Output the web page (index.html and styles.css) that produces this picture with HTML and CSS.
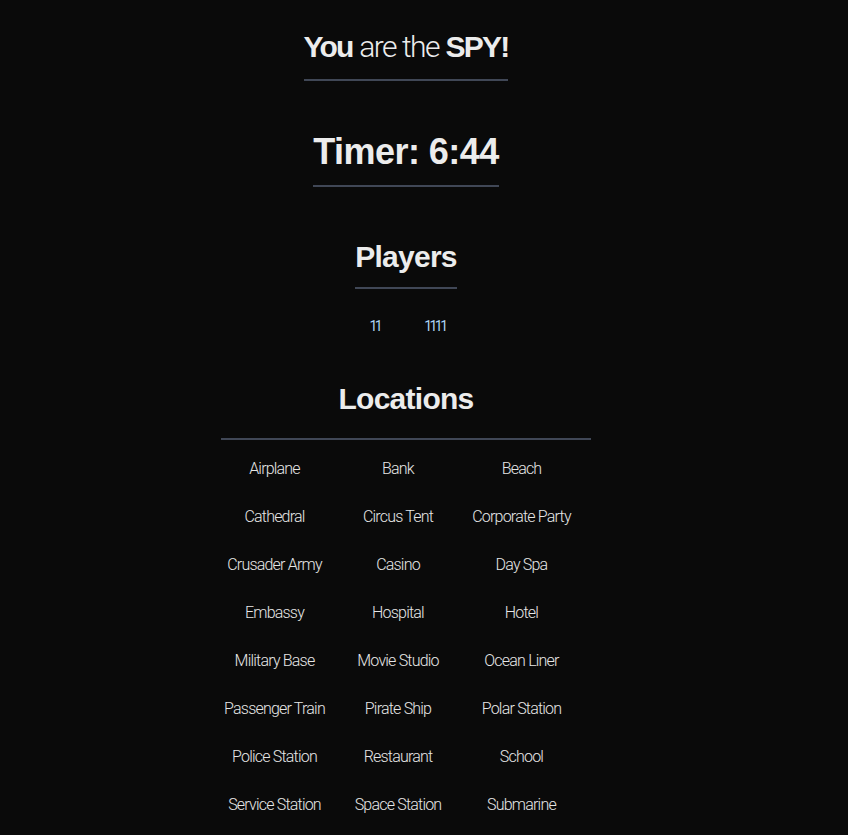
FILE: index.html
```html
<!DOCTYPE html>
<html lang="en">
<head>
<meta charset="utf-8">
<title>Spyfall</title>
<link rel="stylesheet" href="styles.css">
</head>
<body>
<main class="page">
  <h1 class="title"><b>You</b> <span class="thin">are the</span> <b>SPY!</b></h1>
  <h2 class="timer">Timer: 6:44</h2>
  <h2 class="heading players-heading">Players</h2>
  <ul class="players">
    <li>11</li>
    <li>1111</li>
  </ul>
  <h2 class="heading locations-heading">Locations</h2>
  <ul class="locations">
    <li>Airplane</li><li>Bank</li><li>Beach</li>
    <li>Cathedral</li><li>Circus Tent</li><li>Corporate Party</li>
    <li>Crusader Army</li><li>Casino</li><li>Day Spa</li>
    <li>Embassy</li><li>Hospital</li><li>Hotel</li>
    <li>Military Base</li><li>Movie Studio</li><li>Ocean Liner</li>
    <li>Passenger Train</li><li>Pirate Ship</li><li>Polar Station</li>
    <li>Police Station</li><li>Restaurant</li><li>School</li>
    <li>Service Station</li><li>Space Station</li><li>Submarine</li>
  </ul>
</main>
</body>
</html>
```

FILE: styles.css
```css
html, body {
  margin: 0;
  padding: 0;
  background: #0a0a0a;
}
body {
  font-family: "Liberation Sans", Arial, sans-serif;
  color: #ececec;
}
.page {
  width: 812px;
  display: flex;
  flex-direction: column;
  align-items: center;
}
h1, h2 {
  margin: 0;
  font-weight: 700;
  border-bottom: 2px solid #404756;
}
.title {
  margin-top: 29px;
  font-size: 30px;
  line-height: 36px;
  padding-bottom: 14px;
  letter-spacing: -0.06em;
}
.title b { font-weight: 700; }
.title .thin {
  font-family: Roboto, "Liberation Sans", sans-serif;
  font-weight: 300;
  letter-spacing: -0.05em;
}
.timer {
  margin-top: 50px;
  font-size: 36px;
  line-height: 42px;
  padding-bottom: 12px;
  letter-spacing: -0.015em;
}
.heading {
  font-size: 30px;
  line-height: 36px;
  letter-spacing: -0.025em;
}
.players-heading {
  margin-top: 52px;
  padding-bottom: 12px;
}
.players {
  list-style: none;
  margin: 27px 0 0;
  padding: 0 0 0 3px;
  display: flex;
  gap: 44px;
  font-family: Roboto, "Liberation Sans", sans-serif;
  font-weight: 400;
  font-size: 14px;
  line-height: 20px;
  letter-spacing: -2.5px;
  color: #acd2f2;
}
.locations-heading {
  margin-top: 45px;
  width: 370px;
  text-align: center;
  padding-bottom: 21px;
}
.locations {
  list-style: none;
  margin: 4px 16px 0 0;
  padding: 0;
  display: grid;
  grid-template-columns: repeat(3, 123.5px);
  grid-auto-rows: 48px;
  font-family: Roboto, "Liberation Sans", sans-serif;
  font-weight: 300;
  font-size: 16px;
  letter-spacing: -0.05em;
  color: #e6e6e6;
}
.locations li {
  display: flex;
  align-items: center;
  justify-content: center;
  white-space: nowrap;
}
```
